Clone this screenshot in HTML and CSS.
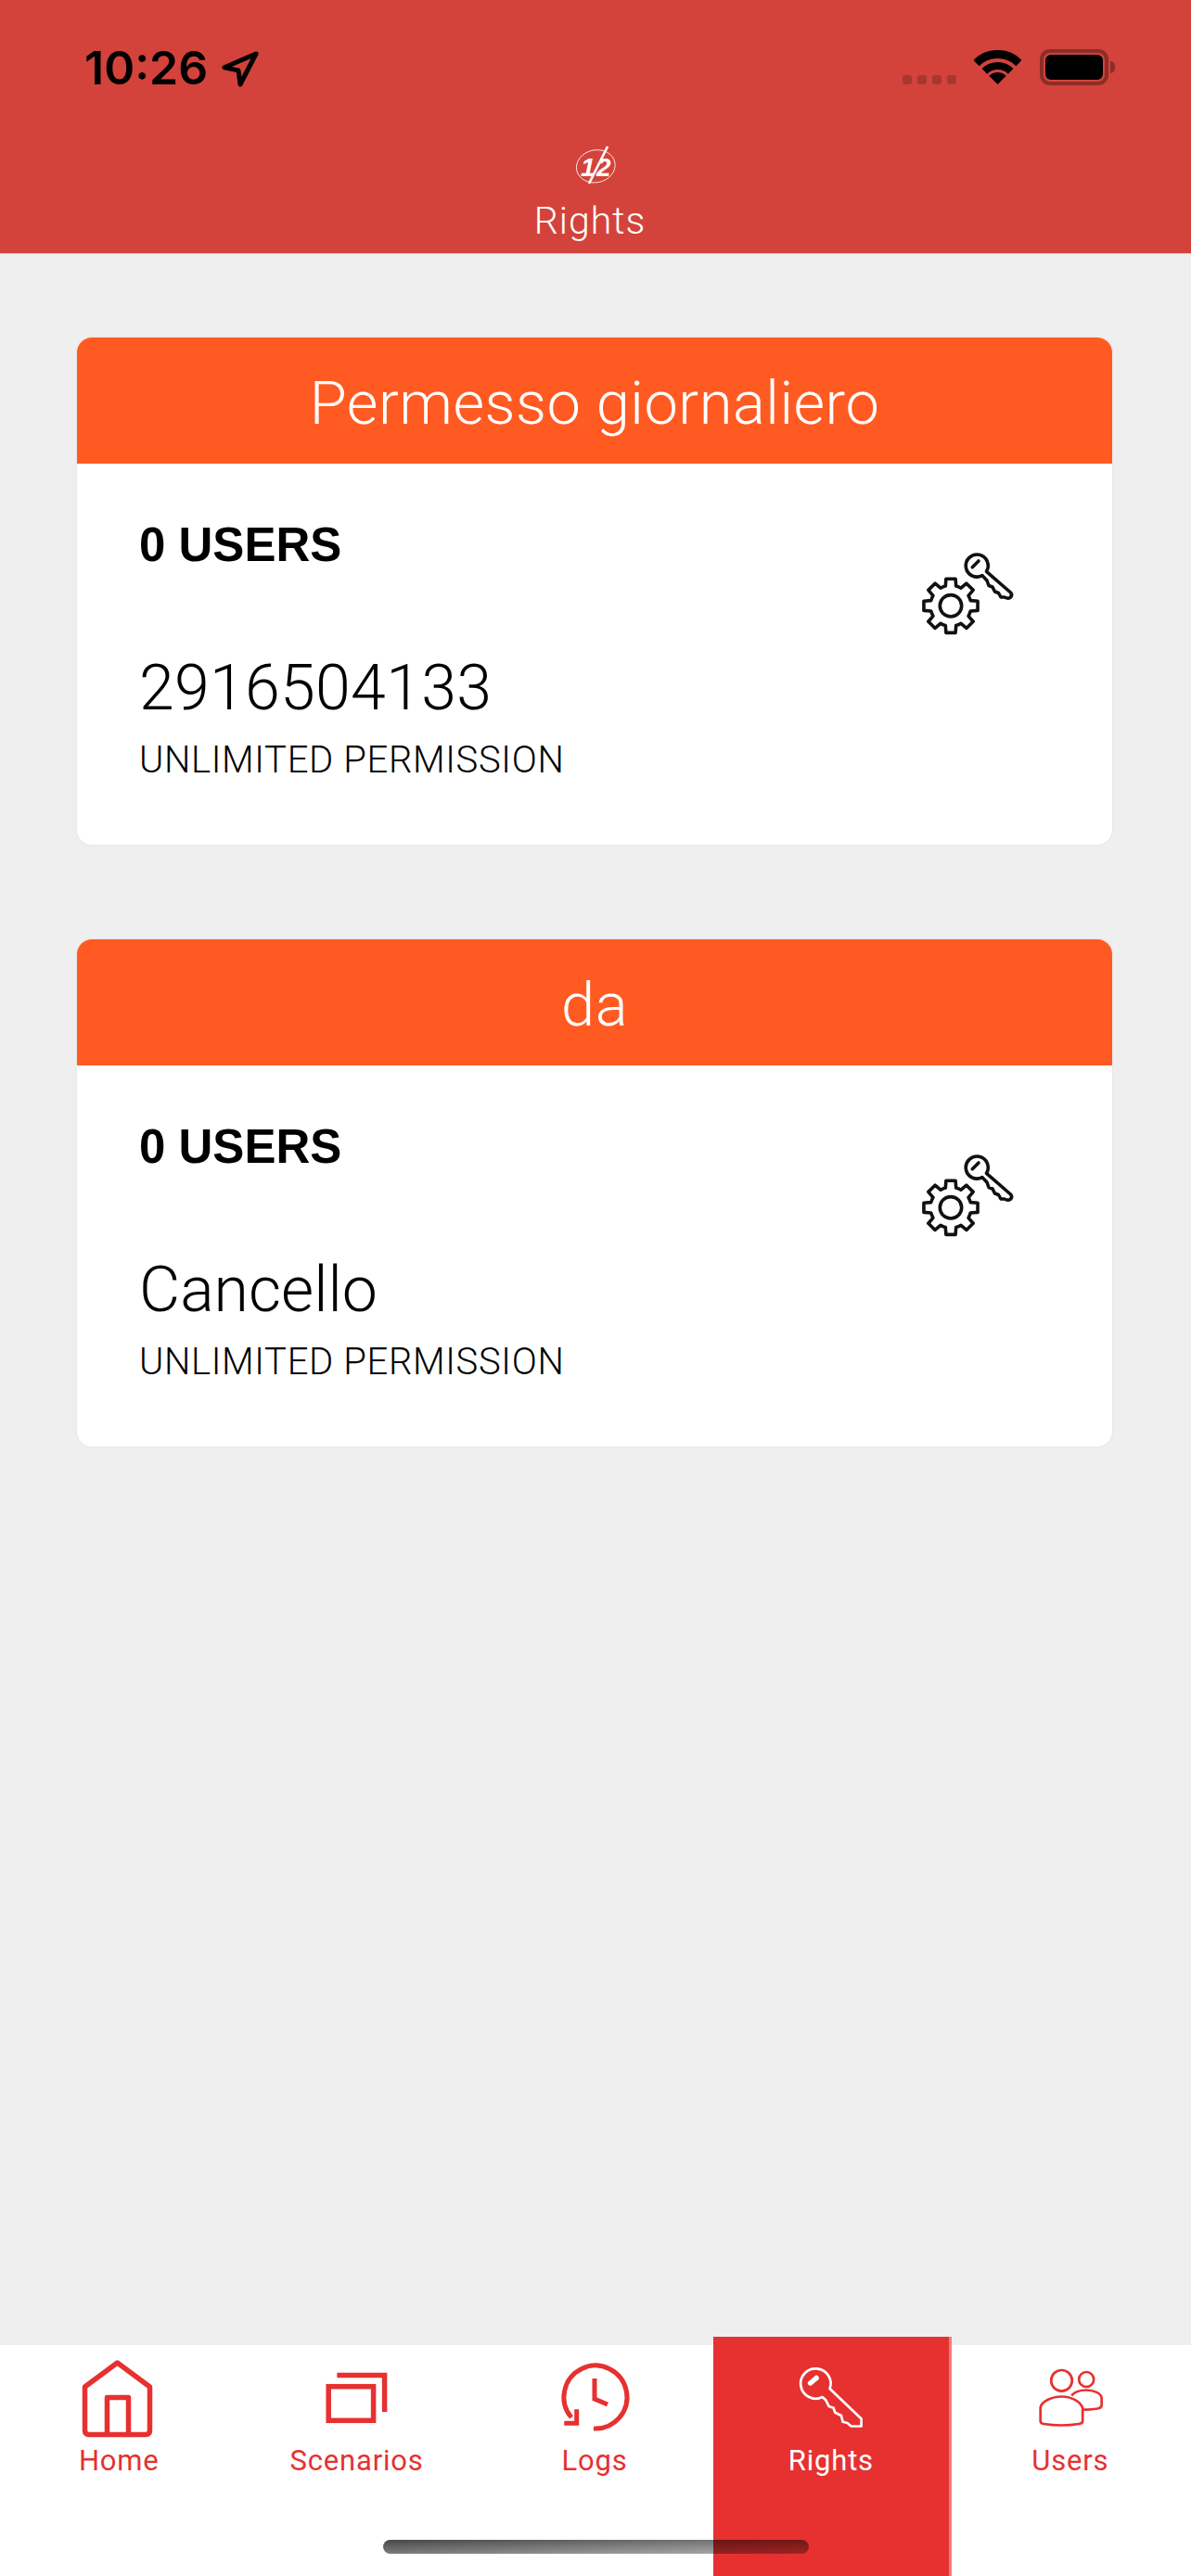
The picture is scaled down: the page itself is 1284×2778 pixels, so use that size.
FILE: index.html
```html
<!DOCTYPE html>
<html lang="en">
<head>
  <meta charset="UTF-8">
  <title>Rights</title>
  <meta name="viewport" content="width=device-width, initial-scale=1">
  <link rel="stylesheet" href="styles.css">
</head>
<body>

  <header class="topbar">
    <div class="status">
      <div class="status-left">
        <span class="clock">10:26</span>
        <svg class="locate" width="48" height="44" viewBox="0 0 48 44"><path d="M43 7 L9 21.7 L24 25 L26 40 Z" fill="none" stroke="#000" stroke-width="5" stroke-linejoin="round"/></svg>
      </div>
      <div class="status-right">
        <div class="signal"><i></i><i></i><i></i><i></i></div>
        <svg class="wifi" width="51" height="37" viewBox="0 0 51 37">
          <path d="M2.5 14 A32.5 32.5 0 0 1 48.5 14" fill="none" stroke="#000" stroke-width="9"/>
          <path d="M11.4 22.9 A20 20 0 0 1 39.6 22.9" fill="none" stroke="#000" stroke-width="8"/>
          <path d="M25.5 37 L16.3 27.8 A13 13 0 0 1 34.7 27.8 Z"/>
        </svg>
        <div class="battery"><span></span></div>
      </div>
    </div>
    <svg class="logo" width="60" height="50" viewBox="0 0 60 50">
      <ellipse cx="28.3" cy="24.3" rx="21" ry="17.5" transform="rotate(-12 28.3 24.3)" fill="none" stroke="#fff" stroke-width="0.8"/>
      <text class="logo-num" x="12" y="35">1</text>
      <text class="logo-num" x="29" y="35">2</text>
      <path d="M41 3 L21 43" stroke="#fff" stroke-width="2.6"/>
    </svg>
    <div class="page-title">Rights</div>
  </header>

  <main class="content">
    <section class="card">
      <h2 class="card-title">Permesso giornaliero</h2>
      <div class="card-body">
        <div class="card-info">
          <div class="users">0 USERS</div>
          <div class="device device-num">2916504133</div>
          <div class="perm">UNLIMITED PERMISSION</div>
        </div>
        <svg class="gear-key" width="160" height="130" viewBox="0 0 160 130">
          <use href="#gearkey"/>
        </svg>
      </div>
    </section>

    <section class="card">
      <h2 class="card-title">da</h2>
      <div class="card-body">
        <div class="card-info">
          <div class="users">0 USERS</div>
          <div class="device">Cancello</div>
          <div class="perm">UNLIMITED PERMISSION</div>
        </div>
        <svg class="gear-key" width="160" height="130" viewBox="0 0 160 130">
          <use href="#gearkey"/>
        </svg>
      </div>
    </section>
  </main>

  <nav class="tabs">
    <a class="tab">
      <svg width="110" height="100" viewBox="0 0 110 100"><g fill="none" stroke="currentColor" stroke-width="5.5" stroke-linejoin="round">
        <path d="M53.5 13 L18.5 39 V86 Q18.5 90.5 23 90.5 H84 Q88.5 90.5 88.5 86 V39 Z"/>
        <path d="M42.5 90 V50.5 H65.5 V90"/>
      </g></svg>
      <span>Home</span>
    </a>
    <a class="tab">
      <svg width="110" height="100" viewBox="0 0 110 100"><g fill="none" stroke="currentColor" stroke-width="5.5">
        <rect x="24.2" y="38.7" width="48.4" height="36.6"/>
        <path d="M33.4 26.5 H84.6 V66"/>
      </g></svg>
      <span>Scenarios</span>
    </a>
    <a class="tab">
      <svg width="110" height="100" viewBox="0 0 110 100"><g fill="none" stroke="currentColor" stroke-width="5">
        <path d="M54 84 A34 34 0 1 0 30 72"/>
        <path d="M35.7 63.3 V78.3 H22.3"/>
        <path d="M55 30 V52 L69 58"/>
      </g></svg>
      <span>Logs</span>
    </a>
    <a class="tab active">
      <svg width="110" height="100" viewBox="0 0 110 100"><g transform="translate(7.6 5)" fill="none" stroke="currentColor">
        <path stroke-width="2.7" stroke-linejoin="round" d="M46 36 L80 68.5 V76.5 H69 L65 73 L60 71.7 L58.3 65 L51.7 61.7 L50 56.7 L45 55 L41.7 48.3 L38 45 A16.2 16.2 0 1 1 46 36 Z"/>
        <path stroke-width="5.5" stroke-linecap="round" d="M25 30 L31.5 24.5"/>
      </g></svg>
      <span>Rights</span>
    </a>
    <a class="tab">
      <svg width="110" height="100" viewBox="0 0 110 100"><g transform="translate(6.2 5)" fill="none" stroke="currentColor" stroke-width="2.7">
        <circle cx="39.3" cy="27.3" r="11.3"/>
        <circle cx="66" cy="26" r="8"/>
        <path d="M16.5 56 C18 50 28 44.5 39.5 44.5 C50 44.5 60 50 62 57 V71 Q62 73.5 58 74 Q39 77 20 74 Q16.5 73.5 16.5 71 Z"/>
        <path d="M50 43.3 C54 39 60 37.5 66 37.5 C74 37.5 82 41 82.5 46 V54 Q82 57 78 57.5 Q70 59 62.5 58.5"/>
      </g></svg>
      <span>Users</span>
    </a>
    <div class="home-bar"></div>
  </nav>

  <svg class="defs" width="0" height="0">
    <defs>
      <g id="gearkey" fill="none" stroke="#111" stroke-width="3.6" stroke-linejoin="round">
        <g transform="translate(65 83.3)">
          <path d="M-5.7 -21.25 L-5.1 -29.05 H5.1 L5.7 -21.25 A22 22 0 0 1 11 -19.06 L16.93 -24.15 L24.15 -16.93 L19.06 -11 A22 22 0 0 1 21.25 -5.7 L29.05 -5.1 V5.1 L21.25 5.7 A22 22 0 0 1 19.06 11 L24.15 16.93 L16.93 24.15 L11 19.06 A22 22 0 0 1 5.7 21.25 L5.1 29.05 H-5.1 L-5.7 21.25 A22 22 0 0 1 -11 19.06 L-16.93 24.15 L-24.15 16.93 L-19.06 11 A22 22 0 0 1 -21.25 5.7 L-29.05 5.1 V-5.1 L-21.25 -5.7 A22 22 0 0 1 -19.06 -11 L-24.15 -16.93 L-16.93 -24.15 L-11 -19.06 A22 22 0 0 1 -5.7 -21.25 Z"/>
          <circle r="11.7"/>
        </g>
        <path d="M103.5 46.3 L129.5 69 Q132 72 129 74.5 Q126.5 76 123 74 L119 74 L116.5 69.5 L112.5 68 L110 63 L106 61.5 L104 56 L99 50.6 A12 12 0 1 1 103.5 46.3 Z"/>
        <path d="M88.3 41.7 L95 35" stroke-linecap="round"/>
      </g>
    </defs>
  </svg>

</body>
</html>
```

FILE: styles.css
```css
* { box-sizing: border-box; }
body {
  margin: 0;
  height: 2778px;
  display: flex;
  flex-direction: column;
  background: #efefef;
  font-family: 'Roboto', 'Liberation Sans', sans-serif;
  overflow: hidden;
}
.defs { position: absolute; }

/* top bar */
.topbar {
  height: 274px;
  background: #d3433b;
  border-bottom: 1px solid #cfcfcf;
  display: flex;
  flex-direction: column;
  align-items: center;
}
.status {
  width: 100%;
  height: 118px;
  padding: 50px 89px 0 91px;
  display: flex;
  justify-content: space-between;
  align-items: flex-start;
}
.status-left { display: flex; align-items: center; }
.clock {
  font-family: 'Inter', sans-serif;
  font-weight: 600;
  font-size: 50px;
  line-height: 46px;
  color: #000;
}
.locate { margin-left: 9px; }
.status-right { display: flex; align-items: flex-start; padding-top: 3px; }
.signal { display: flex; gap: 6px; margin-top: 28px; margin-right: 19px; }
.signal i {
  width: 10px;
  height: 10px;
  border-radius: 3px;
  background: #a93730;
}
.wifi { margin-right: 20px; margin-top: 1px; }
.battery {
  position: relative;
  width: 74px;
  height: 39px;
  padding: 2px;
  border: 4px solid #8c2d28;
  border-radius: 11px;
}
.battery::after {
  content: "";
  position: absolute;
  right: -11px;
  top: 9px;
  width: 5px;
  height: 13px;
  border-radius: 0 6px 6px 0;
  background: #8c2d28;
}
.battery span {
  display: block;
  height: 100%;
  border-radius: 6px;
  background: #000;
}
.logo { margin-top: 37px; margin-left: 4px; }
.logo-num {
  font-family: 'Liberation Sans', sans-serif;
  font-weight: 700;
  font-style: italic;
  font-size: 28px;
  fill: #fff;
}
.page-title {
  margin-top: 10px;
  margin-right: 12px;
  font-size: 41px;
  line-height: 47px;
  font-weight: 300;
  letter-spacing: 1px;
  color: #fff;
}

/* permission cards */
.content {
  flex: 1;
  padding: 90px 85px 0 83px;
}
.card {
  height: 547px;
  margin-bottom: 102px;
  background: #fff;
  border-radius: 16px;
  overflow: hidden;
  box-shadow: 0 0 2px #d8d8d8;
}
.card-title {
  margin: 0;
  height: 136px;
  background: #ff5a22;
  color: #fff;
  font-size: 65px;
  font-weight: 300;
  letter-spacing: 0.5px;
  line-height: 142px;
  text-align: center;
}
.card-body {
  display: flex;
  justify-content: space-between;
  align-items: flex-start;
  padding: 0 79px 0 67px;
}
.users {
  margin-top: 59px;
  font-family: 'Liberation Sans', sans-serif;
  font-weight: 700;
  font-size: 51px;
  line-height: 57px;
  color: #000;
}
.device {
  margin-top: 86px;
  font-size: 68px;
  font-weight: 300;
  line-height: 80px;
  color: #000;
}
.device-num { letter-spacing: 0.3px; }
.perm {
  margin-top: 15px;
  font-size: 40px;
  font-weight: 300;
  letter-spacing: 0.65px;
  line-height: 45px;
  color: #000;
}
.gear-key { margin-top: 70px; }

/* bottom tabs */
.tabs {
  position: relative;
  height: 249px;
  padding-right: 2px;
  background: #fff;
  display: grid;
  grid-template-columns: repeat(5, 1fr);
}
.tab {
  display: flex;
  flex-direction: column;
  align-items: center;
  padding-top: 6px;
  color: #e63130;
}
.tab span {
  margin-top: 1px;
  font-size: 31px;
  line-height: 36px;
  letter-spacing: 0.8px;
}
.tab.active {
  margin-top: -9px;
  padding-top: 15px;
  background: #e63130;
  border-right: 3px solid #ee7f7d;
  color: #fff;
}
.home-bar {
  position: absolute;
  left: 413px;
  top: 210px;
  width: 459px;
  height: 15px;
  border-radius: 8px;
  background: linear-gradient(178deg, rgba(0,0,0,.72), rgba(0,0,0,.3));
}
```
